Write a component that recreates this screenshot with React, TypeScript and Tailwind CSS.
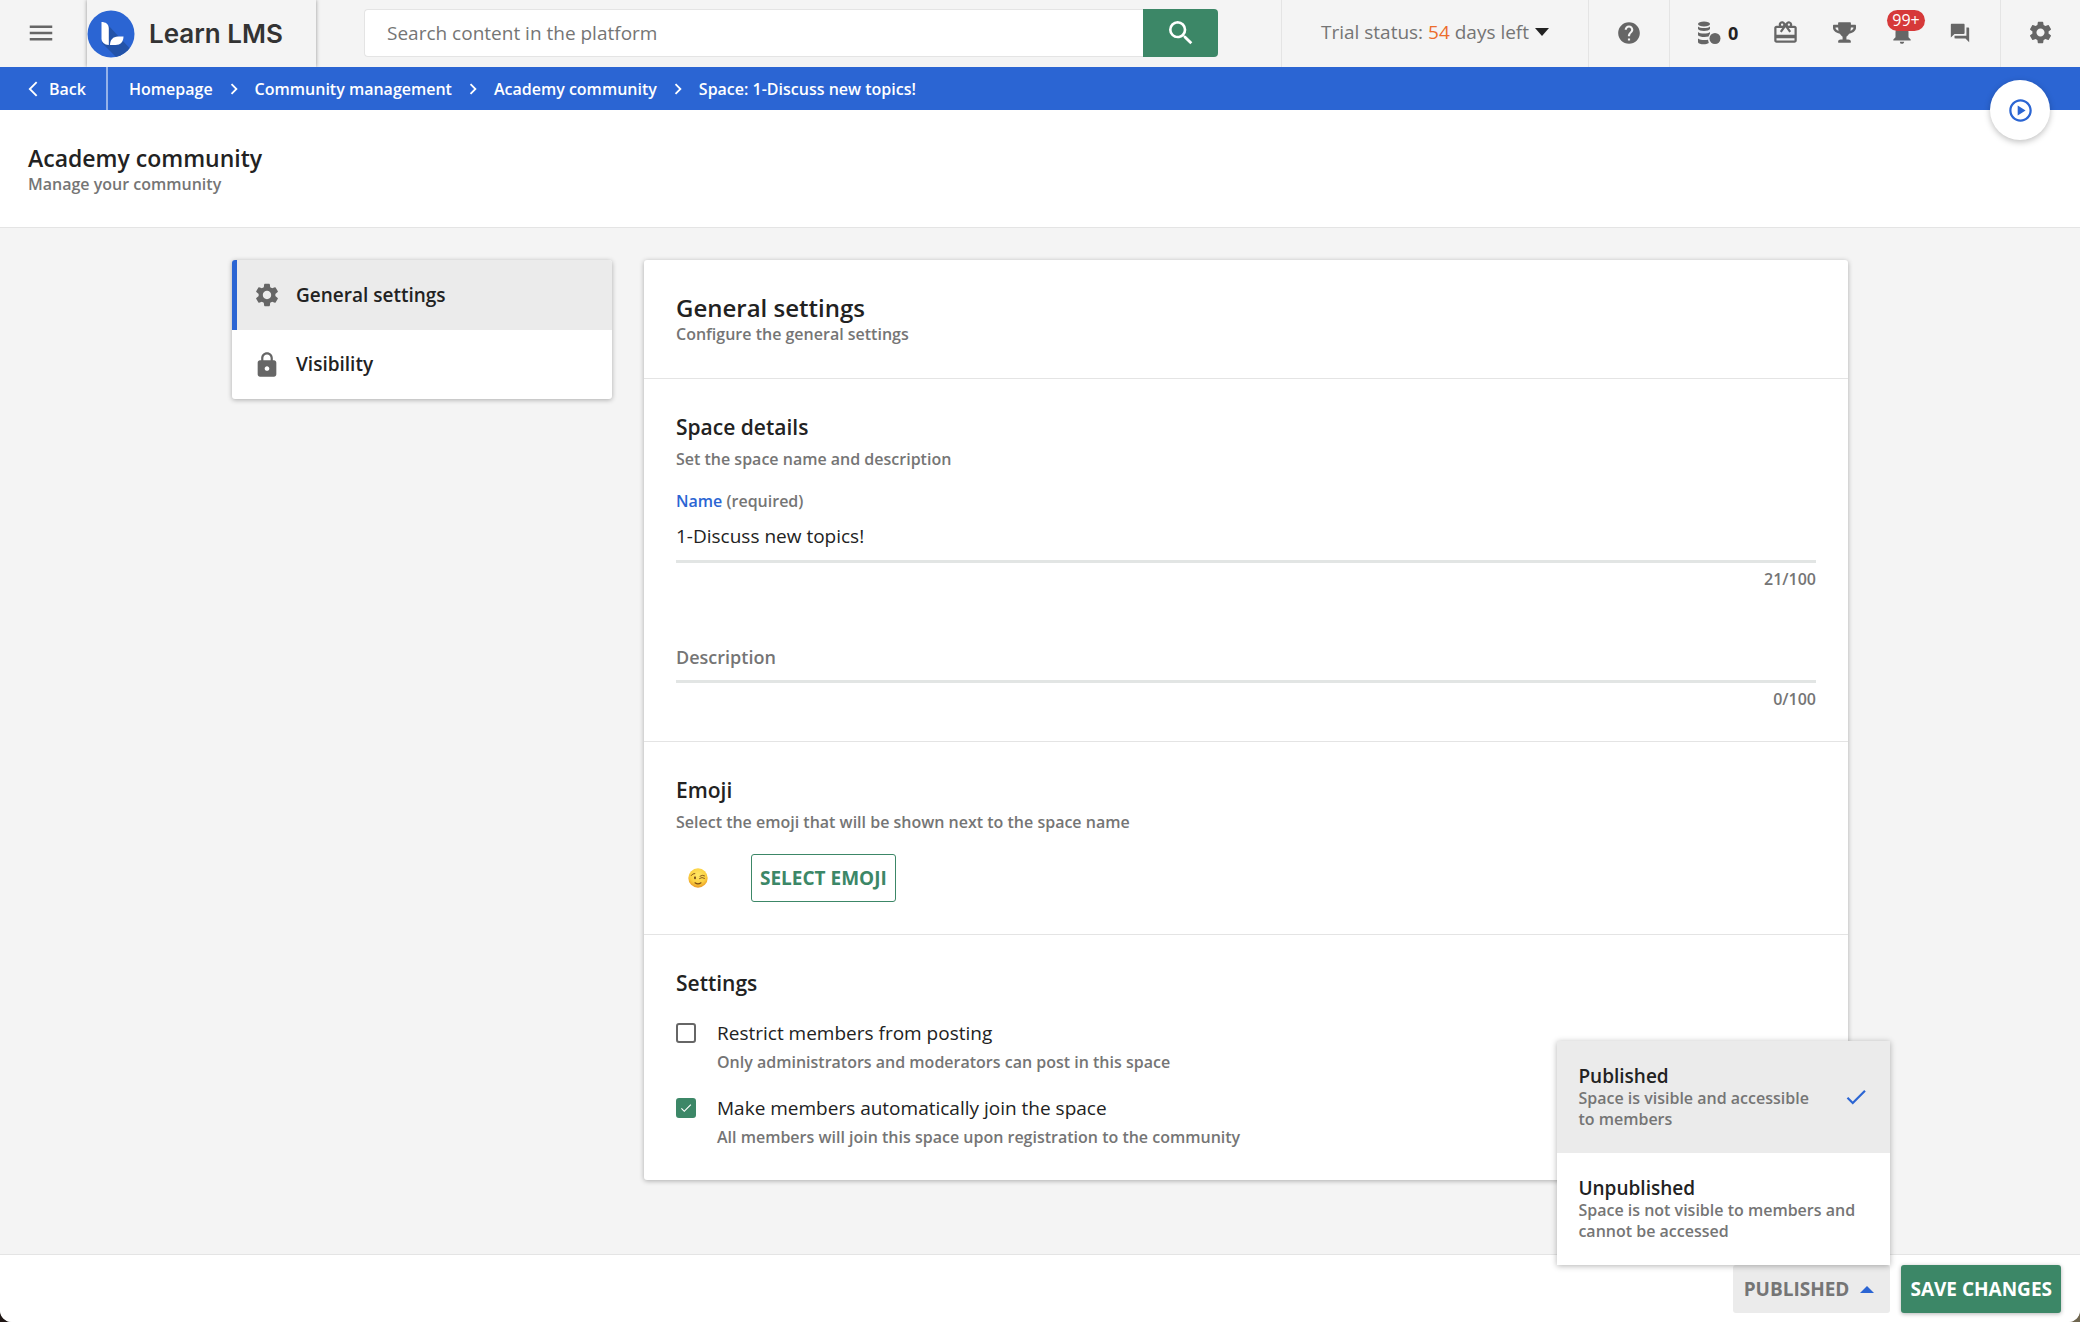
import { useState } from "react";
import {
  MdCheck,
  MdChevronRight,
  MdArrowBackIosNew,
  MdCardGiftcard,
  MdForum,
  MdHelp,
  MdLock,
  MdMenu,
  MdNotifications,
  MdOutlinePlayCircle,
  MdSearch,
  MdSettings,
} from "react-icons/md";
import { FaTrophy } from "react-icons/fa";

const CRUMBS = ["Homepage", "Community management", "Academy community", "Space: 1-Discuss new topics!"];

const STATUSES = [
  { id: "published", title: "Published", text: "Space is visible and accessible to members" },
  { id: "unpublished", title: "Unpublished", text: "Space is not visible to members and cannot be accessed" },
];

function Logo() {
  return (
    <svg viewBox="0 0 48 48" className="size-12 shrink-0" aria-hidden="true">
      <defs>
        <clipPath id="logo-disc">
          <circle cx="24" cy="24" r="23.5" />
        </clipPath>
      </defs>
      <circle cx="24" cy="24" r="23.5" fill="#2b65d3" />
      <path d="M21 15 L48 44 L44 50 L32 50 L15 33 Z" fill="#2353a8" clipPath="url(#logo-disc)" />
      <path d="M14.500 12 c4 0 7.300 2 7.300 6.500 v16.500 c-4.500 0 -7.300 -3 -7.300 -6.500 z" fill="#fff" />
      <path d="M23 35 c0 -5 3 -8.500 8 -8.500 h5.500 c0 5 -3 8.500 -8 8.500 z" fill="#fff" />
    </svg>
  );
}

function CoinsIcon() {
  return (
    <svg viewBox="0 0 24 24" className="size-6" fill="currentColor" aria-hidden="true">
      <ellipse cx="7" cy="3" rx="6" ry="2.5" />
      <path d="M1 5.5c2 2 10 2 12 0v2.500c-1 2.600-11 2.600-12 0z" />
      <path d="M1 11c2 2 10 2 12 0v1.500l-1.500 3c-3 .8-9.500.6-10.500-1.300z" />
      <path d="M1 17.500c2 1.600 7 2 10 1.200l.8 3.300c-3 2-10 1.500-10.800-.8z" />
      <circle cx="18" cy="17.500" r="5.500" />
    </svg>
  );
}

function WinkEmoji() {
  return (
    <svg viewBox="0 0 20 20" className="size-5" role="img" aria-label="Winking face">
      <defs>
        <radialGradient id="wink" cx="50%" cy="35%" r="65%">
          <stop offset="0" stopColor="#ffe869" />
          <stop offset="0.65" stopColor="#fbcf3f" />
          <stop offset="1" stopColor="#ea9a25" />
        </radialGradient>
      </defs>
      <circle cx="10" cy="10" r="9.700" fill="url(#wink)" />
      <ellipse cx="7" cy="9.800" rx="0.900" ry="1.500" fill="#6b3f14" />
      <path d="M3.200 7.500 Q4.500 5.300 6.800 5.500" stroke="#7b4a14" strokeWidth="0.900" fill="none" strokeLinecap="round" />
      <path d="M11.500 10.500 Q14 8.500 16.500 10.300 M12 8.200 Q14.500 6.500 16.500 7.800" stroke="#7b4a14" strokeWidth="0.900" fill="none" strokeLinecap="round" />
      <path d="M7 14.800 Q10 17 13 14.800" stroke="#7b4a14" strokeWidth="1.200" fill="none" strokeLinecap="round" />
    </svg>
  );
}

function Header() {
  return (
    <header className="flex h-[67px] items-stretch bg-[#f4f4f4] text-[#666]">
      <button aria-label="Menu" className="flex w-[87px] items-center pb-0.5 pl-[26px]">
        <MdMenu size={30} />
      </button>
      <a href="#" className="flex w-[229px] items-center gap-[14px] bg-[#f4f4f4] shadow-[0_0_4px_rgba(0,0,0,0.4)]">
        <Logo />
        <span className="font-[Inter,sans-serif] text-[26px] font-semibold text-[#333]">Learn LMS</span>
      </a>
      <form className="mt-[9px] ml-12 flex h-12 w-[854px]" onSubmit={(e) => e.preventDefault()}>
        <input
          aria-label="Search content in the platform"
          placeholder="Search content in the platform"
          className="min-w-0 flex-1 rounded-l-sm border border-r-0 border-[#e4e4e4] bg-white px-[22px] text-[19px] outline-none placeholder:text-[#757575]"
        />
        <button aria-label="Search" className="flex w-[75px] items-center justify-center rounded-r-sm bg-[#3c8767] text-white">
          <MdSearch size={32} />
        </button>
      </form>
      <div className="ml-auto flex">
        <button className="flex w-[307px] items-center justify-center gap-[6px] border-l border-[#e4e4e4] pb-[3px] text-[19px]">
          <span className="text-[#757575]">
            Trial status: <span className="text-[#ec6c2c]">54</span> days left
          </span>
          <span className="border-x-[7px] border-t-[8px] border-x-transparent border-t-[#222]" />
        </button>
        <button aria-label="Help" className="flex w-[81px] items-center justify-center border-l border-[#e4e4e4] pb-0.5">
          <MdHelp size={26} />
        </button>
        <div className="flex w-[331px] items-center justify-between border-l border-[#e4e4e4] pr-[29px] pb-0.5 pl-[27px]">
          <button aria-label="Coins" className="flex items-center gap-[7px] text-lg font-bold text-[#222]">
            <span className="text-[#666]">
              <CoinsIcon />
            </span>
            0
          </button>
          <button aria-label="Rewards">
            <MdCardGiftcard size={27} />
          </button>
          <button aria-label="Leaderboard">
            <FaTrophy size={23} />
          </button>
          <button aria-label="Notifications" className="relative">
            <MdNotifications size={26} />
            <span className="absolute -top-[10px] -left-[2px] rounded-full bg-[#d63939] px-[5px] text-base leading-[21px] font-medium text-white">99+</span>
          </button>
          <button aria-label="Messages">
            <MdForum size={22} />
          </button>
        </div>
        <button aria-label="Settings" className="flex w-20 items-center justify-center border-l border-[#e4e4e4] pb-0.5">
          <MdSettings size={27} />
        </button>
      </div>
    </header>
  );
}

function Breadcrumbs() {
  return (
    <nav className="relative flex h-[43px] items-stretch bg-[#2b65d3] text-base font-semibold text-white">
      <a href="#" className="flex w-[108px] items-center gap-[7px] border-r-2 border-white/50 pl-6">
        <MdArrowBackIosNew size={18} />
        Back
      </a>
      <ol className="flex items-center pl-[21px]">
        {CRUMBS.map((crumb, i) => (
          <li key={crumb} className="flex items-center">
            {i > 0 && <MdChevronRight size={22} className="mx-[10px]" />}
            <a href="#">{crumb}</a>
          </li>
        ))}
      </ol>
      <button
        aria-label="Play tour"
        className="absolute top-[13px] right-[30px] flex size-[60px] items-center justify-center rounded-full bg-white text-[#2b65d3] shadow-[0_2px_6px_rgba(0,0,0,0.25)]"
      >
        <MdOutlinePlayCircle size={27} />
      </button>
    </nav>
  );
}

function SideNav() {
  return (
    <nav className="w-[380px] shrink-0 overflow-hidden rounded-[3px] bg-white text-[19px] font-semibold text-[#222] shadow-[0_1px_5px_rgba(0,0,0,0.3)]">
      <a href="#general" className="flex h-[70px] items-center gap-[15px] border-l-[5px] border-[#2b65d3] bg-[#ebebeb] pl-4">
        <MdSettings size={28} className="text-[#666]" />
        General settings
      </a>
      <a href="#visibility" className="flex h-[69px] items-center gap-[15px] pl-[21px]">
        <MdLock size={28} className="text-[#666]" />
        Visibility
      </a>
    </nav>
  );
}

function SectionTitle({ title, text }: { title: string; text?: string }) {
  return (
    <>
      <h3 className="text-[21px] leading-8 font-semibold">{title}</h3>
      {text && <p className="mt-1 text-base leading-6 font-semibold text-[#757575]">{text}</p>}
    </>
  );
}

function Option({ id, title, text, defaultChecked }: { id: string; title: string; text: string; defaultChecked?: boolean }) {
  return (
    <div className="flex gap-[21px]">
      <span className="relative mt-1 size-5 shrink-0">
        <input
          id={id}
          type="checkbox"
          defaultChecked={defaultChecked}
          className="peer block size-5 appearance-none rounded-[3px] border-2 border-[#666] checked:border-[#3c8767] checked:bg-[#3c8767]"
        />
        <MdCheck size={14} className="pointer-events-none absolute top-[3px] left-[3px] hidden text-white peer-checked:block" />
      </span>
      <div>
        <label htmlFor={id} className="block text-[19px] leading-7">
          {title}
        </label>
        <p className="mt-[3px] text-base leading-6 font-semibold text-[#757575]">{text}</p>
      </div>
    </div>
  );
}

function SettingsCard() {
  const [name, setName] = useState("1-Discuss new topics!");
  const [description, setDescription] = useState("");

  return (
    <section className="min-w-0 flex-1 rounded-[3px] bg-white shadow-[0_1px_5px_rgba(0,0,0,0.3)]">
      <div className="border-b border-[#e4e4e4] px-8 pt-8 pb-[34px]">
        <h2 className="text-2xl leading-8 font-semibold">General settings</h2>
        <p className="text-base leading-5 font-semibold text-[#757575]">Configure the general settings</p>
      </div>

      <div className="border-b border-[#e4e4e4] px-8 pt-8 pb-[30px]">
        <SectionTitle title="Space details" text="Set the space name and description" />
        <label htmlFor="name" className="mt-[18px] block text-base leading-6 font-semibold text-[#2b65d3]">
          Name <span className="text-[#757575]">(required)</span>
        </label>
        <input
          id="name"
          value={name}
          onChange={(e) => setName(e.target.value)}
          className="block h-[50px] w-full border-b-[3px] border-[#e2e5e4] pb-px text-[19px] outline-none"
        />
        <p className="mt-1 text-right text-base leading-6 font-semibold text-[#757575]">{name.length}/100</p>
        <input
          aria-label="Description"
          placeholder="Description"
          value={description}
          onChange={(e) => setDescription(e.target.value)}
          className="mt-[42px] block h-[50px] w-full border-b-[3px] border-[#e2e5e4] text-lg outline-none placeholder:font-semibold placeholder:text-[#757575]"
        />
        <p className="mt-1 text-right text-base leading-6 font-semibold text-[#757575]">{description.length}/100</p>
      </div>

      <div className="border-b border-[#e4e4e4] px-8 py-8">
        <SectionTitle title="Emoji" text="Select the emoji that will be shown next to the space name" />
        <div className="mt-5 flex items-center gap-[43px] pl-3">
          <WinkEmoji />
          <button className="h-12 rounded-[3px] border border-[#3c8767] px-2 text-[19px] font-bold text-[#3c8767]">SELECT EMOJI</button>
        </div>
      </div>

      <div className="px-8 pt-8 pb-[31px]">
        <SectionTitle title="Settings" />
        <div className="mt-5 flex flex-col gap-5">
          <Option id="restrict" title="Restrict members from posting" text="Only administrators and moderators can post in this space" />
          <Option
            id="autojoin"
            title="Make members automatically join the space"
            text="All members will join this space upon registration to the community"
            defaultChecked
          />
        </div>
      </div>
    </section>
  );
}

function StatusPicker() {
  const [status, setStatus] = useState("published");

  return (
    <div className="relative">
      <button aria-expanded="true" className="flex h-12 items-center gap-[11px] rounded-[3px] bg-[#ebebeb] pr-4 pl-[11px] text-[19px] font-bold text-[#757575]">
        {status.toUpperCase()}
        <span className="border-x-[7px] border-b-[7px] border-x-transparent border-b-[#2b65d3]" />
      </button>
      <ul className="absolute right-0 bottom-full w-[333px] bg-white shadow-[0_1px_6px_rgba(0,0,0,0.3)]">
        {STATUSES.map((s) => (
          <li key={s.id}>
            <button
              onClick={() => setStatus(s.id)}
              className={`flex h-28 w-full items-center justify-between gap-6 px-[21px] text-left ${s.id === status ? "bg-[#ebebeb]" : "bg-white"}`}
            >
              <span>
                <span className="block text-[19px] leading-6 font-semibold">{s.title}</span>
                <span className="block text-base leading-[21px] font-semibold text-[#757575]">{s.text}</span>
              </span>
              {s.id === status && <MdCheck size={26} className="shrink-0 text-[#2b65d3]" />}
            </button>
          </li>
        ))}
      </ul>
    </div>
  );
}

export default function App() {
  return (
    <div className="bg-linear-to-r from-[#1f1614] to-[#6f6650]">
      <div className="flex min-h-screen flex-col overflow-hidden rounded-b-xl bg-[#f4f4f4] font-['Open_Sans',sans-serif] text-[#222]">
        <Header />
        <Breadcrumbs />

        <div className="border-b border-[#e4e4e4] bg-white px-7 pt-8 pb-[33px]">
          <h1 className="text-[23px] leading-8 font-semibold">Academy community</h1>
          <p className="text-base leading-5 font-semibold text-[#757575]">Manage your community</p>
        </div>

        <main className="mx-auto flex w-full max-w-[1616px] flex-1 items-start gap-8 py-8">
          <SideNav />
          <SettingsCard />
        </main>

        {/* Bottom action bar */}
        <footer className="flex items-start justify-end gap-[11px] border-t border-[#e4e4e4] bg-white px-[19px] pt-[10px] pb-[9px]">
          <StatusPicker />
          <button className="h-12 rounded-[3px] bg-[#3c8767] px-[9px] text-[19px] font-bold text-white shadow-[0_1px_4px_rgba(0,0,0,0.3)]">
            SAVE CHANGES
          </button>
        </footer>
      </div>
    </div>
  );
}
